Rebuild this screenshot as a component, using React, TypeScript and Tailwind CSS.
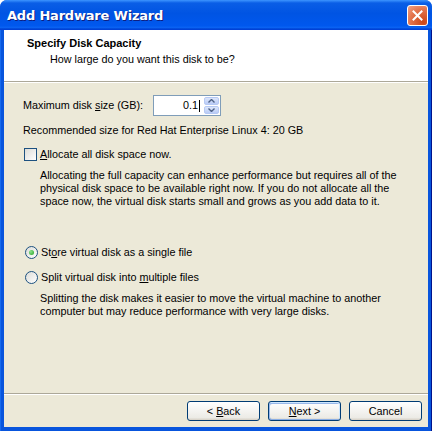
import React from "react";

const ui = "font-['Liberation_Sans',Arial,sans-serif] text-[10.8px] leading-[13px] text-black";

function CheckBox() {
  return (
    <div className="w-[13px] h-[13px] shrink-0 border border-[#1c5180] bg-[linear-gradient(135deg,#dcdcd7,#ffffff)]" />
  );
}

function Radio({ checked }: { checked?: boolean }) {
  return (
    <div className="w-[13px] h-[13px] shrink-0 rounded-full border border-[#1c5180] bg-[linear-gradient(135deg,#dcdcd7,#ffffff)] flex items-center justify-center">
      {checked && (
        <div className="w-[5px] h-[5px] rounded-full bg-[radial-gradient(circle_at_35%_35%,#8ee28e,#21a121)]" />
      )}
    </div>
  );
}

function Button({ children, isDefault }: { children: React.ReactNode; isDefault?: boolean }) {
  return (
    <div
      className={`w-[73px] h-[20px] rounded-[3px] border border-[#003c74] bg-[linear-gradient(180deg,#ffffff,#ecebe6_86%,#d6d0c5)] flex items-center justify-center ${
        isDefault ? "shadow-[inset_-1px_1px_#cee7ff,inset_1px_2px_#98b8ea,inset_1px_-1px_#89ade4]" : ""
      }`}
    >
      {children}
    </div>
  );
}

function Spinner() {
  return (
    <div className="w-[68px] h-[21px] border border-[#7f9db9] bg-white flex items-center pr-[1px]">
      <div className="flex-1 flex items-center justify-end pr-[4px]">
        <span>0.1</span>
        <span className="w-px h-[12px] bg-black ml-[1px]" />
      </div>
      <div className="w-[15px] h-[17px] flex flex-col gap-px">
        {[0, 1].map((i) => (
          <div
            key={i}
            className="flex-1 rounded-[2px] border border-[#b6c9f4] bg-[linear-gradient(180deg,#dce6fb,#b9cbf6)] flex items-center justify-center"
          >
            <svg width="7" height="4" viewBox="0 0 7 4">
              <path
                d={i === 0 ? "M0.5 3.5 L3.5 0.5 L6.5 3.5" : "M0.5 0.5 L3.5 3.5 L6.5 0.5"}
                fill="none"
                stroke="#4d6185"
                strokeWidth="1.4"
              />
            </svg>
          </div>
        ))}
      </div>
    </div>
  );
}

export default function App() {
  return (
    <div className={`w-[432px] h-[431px] bg-white ${ui}`}>
      <div className="w-full h-full flex flex-col rounded-t-[7px] overflow-hidden bg-[#0855dd]">
        {/* Title bar */}
        <div className="h-[30px] shrink-0 flex items-center justify-between pl-[7px] pr-[4px] bg-[linear-gradient(180deg,#3d95ff,#0a5ee6_10%,#0054e3_45%,#0058ee_85%,#0a62f2_92%,#0047d8_96%,#003dd7)]">
          <span className="font-['DejaVu_Sans',sans-serif] font-bold text-[13px] text-white [text-shadow:1px_1px_#0f1f80] tracking-[-0.2px]">
            Add Hardware Wizard
          </span>
          <div className="w-[21px] h-[21px] rounded-[3px] border border-white bg-[radial-gradient(circle_at_80%_85%,#cc4616,#e4764f_60%,#f2a387)] flex items-center justify-center">
            <svg width="11" height="11" viewBox="0 0 11 11">
              <path d="M1.5 1.5 L9.5 9.5 M9.5 1.5 L1.5 9.5" stroke="#ffffff" strokeWidth="2" strokeLinecap="square" />
            </svg>
          </div>
        </div>

        {/* Frame */}
        <div className="flex-1 flex flex-col px-[4px] pb-[4px] shadow-[inset_1px_0_#166aee,inset_-1px_0_#00138c]">
          <div className="flex-1 flex flex-col bg-[#ece9d8]">
            {/* Header */}
            <div className="h-[51px] shrink-0 bg-white pt-[7px]">
              <div className="pl-[23px] font-bold text-[11px]">Specify Disk Capacity</div>
              <div className="pl-[46px] mt-[3px]">How large do you want this disk to be?</div>
            </div>
            <div className="h-px bg-[#aca899]" />
            <div className="h-px bg-white" />

            {/* Body */}
            <div className="flex-1 flex flex-col pl-[19px] pr-[10px]">
              <div className="mt-[12px] flex items-center">
                <span className="w-[130px]">
                  Maximum disk <span className="underline">s</span>ize (GB):
                </span>
                <Spinner />
              </div>
              <div className="mt-[8px]">Recommended size for Red Hat Enterprise Linux 4: 20 GB</div>
              <div className="mt-[11px] flex items-center pl-px">
                <CheckBox />
                <span className="ml-[3px]">
                  <span className="underline">A</span>llocate all disk space now.
                </span>
              </div>
              <p className="mt-[8px] pl-[17px]">
                Allocating the full capacity can enhance performance but requires all of the
                <br />
                physical disk space to be available right now. If you do not allocate all the
                <br />
                space now, the virtual disk starts small and grows as you add data to it.
              </p>
              <div className="mt-[38px] flex items-center pl-[2px]">
                <Radio checked />
                <span className="ml-[3px]">
                  St<span className="underline">o</span>re virtual disk as a single file
                </span>
              </div>
              <div className="mt-[12px] flex items-center pl-[2px]">
                <Radio />
                <span className="ml-[3px]">
                  Split virtual disk into <span className="underline">m</span>ultiple files
                </span>
              </div>
              <p className="mt-[8px] pl-[17px]">
                Splitting the disk makes it easier to move the virtual machine to another
                <br />
                computer but may reduce performance with very large disks.
              </p>
            </div>

            {/* Footer */}
            <div className="h-px bg-[#aca899]" />
            <div className="h-px bg-white" />
            <div className="flex justify-end gap-[8px] pt-[6px] pb-[6px] pr-[6px]">
              <Button>
                &lt; <span className="underline ml-[3px]">B</span>ack
              </Button>
              <Button isDefault>
                <span className="underline">N</span>ext &gt;
              </Button>
              <Button>Cancel</Button>
            </div>
          </div>
        </div>
      </div>
    </div>
  );
}
